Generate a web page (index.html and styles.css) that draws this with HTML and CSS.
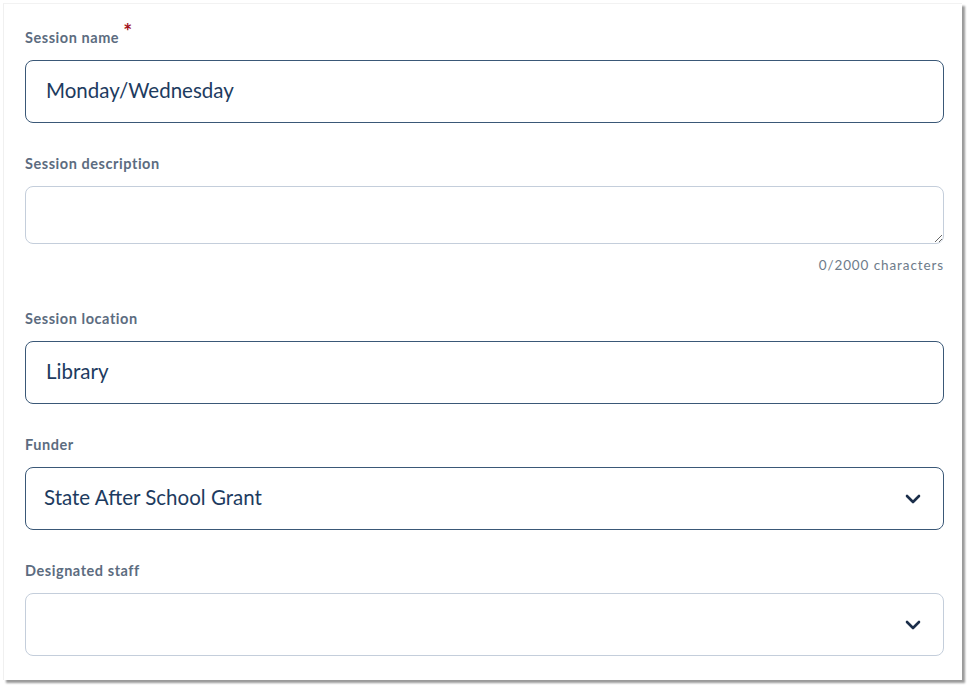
FILE: index.html
```html
<!DOCTYPE html>
<html lang="en">
<head>
<meta charset="utf-8">
<title>Session form</title>
<link rel="stylesheet" href="styles.css">
</head>
<body>
<div class="card">
  <form class="form">
    <div class="field">
      <label class="label" for="name">Session name <span class="req">*</span></label>
      <input id="name" class="control control--active" type="text" value="Monday/Wednesday">
    </div>
    <div class="field">
      <label class="label" for="desc">Session description</label>
      <textarea id="desc" class="control control--area"></textarea>
      <div class="counter">0/2000 characters</div>
    </div>
    <div class="field field--loc">
      <label class="label" for="loc">Session location</label>
      <input id="loc" class="control control--active" type="text" value="Library">
    </div>
    <div class="field">
      <label class="label" for="funder">Funder</label>
      <div class="select-wrap">
        <select id="funder" class="control control--active control--select">
          <option>State After School Grant</option>
        </select>
        <svg class="chev" viewBox="0 0 16 10" width="16" height="10"><path d="M2 2 L8 8 L14 2" fill="none" stroke="#1b2e4a" stroke-width="2.6" stroke-linecap="round" stroke-linejoin="round"/></svg>
      </div>
    </div>
    <div class="field">
      <label class="label" for="staff">Designated staff</label>
      <div class="select-wrap">
        <select id="staff" class="control control--select">
          <option></option>
        </select>
        <svg class="chev" viewBox="0 0 16 10" width="16" height="10"><path d="M2 2 L8 8 L14 2" fill="none" stroke="#1b2e4a" stroke-width="2.6" stroke-linecap="round" stroke-linejoin="round"/></svg>
      </div>
    </div>
  </form>
</div>
</body>
</html>
```
FILE: styles.css
```css
html, body {
  margin: 0;
  padding: 0;
  background: #ffffff;
}
body {
  font-family: "Lato", "Open Sans", sans-serif;
  width: 972px;
  height: 688px;
  overflow: hidden;
}
.card {
  margin: 3px 0 0 3px;
  width: 959px;
  height: 677px;
  box-sizing: border-box;
  background: #ffffff;
  border-left: 1px solid #f0f0f0;
  border-top: 1px solid #f2f2f2;
  box-shadow: 3px 3px 2px #9a9a9a;
  overflow: hidden;
}
.form {
  display: flex;
  flex-direction: column;
  gap: 31px;
  padding: 24px 18px 0 21px;
}
.field {
  display: flex;
  flex-direction: column;
}
.field--loc {
  margin-top: 4px;
}
.label {
  font-size: 14.5px;
  font-weight: 700;
  line-height: 19px;
  color: #5c6c80;
  margin-bottom: 13px;
  letter-spacing: 0.55px;
}
.req {
  color: #a3131c;
  font-size: 21px;
  line-height: 0;
  position: relative;
  top: -4px;
  margin-left: 0;
}
.control {
  box-sizing: border-box;
  width: 100%;
  height: 63px;
  border: 1px solid #c4cedb;
  border-radius: 8px;
  background: #ffffff;
  font-family: "Lato", "Open Sans", sans-serif;
  font-size: 20.5px;
  color: #1d3b60;
  padding: 0 19px 3px;
  outline: none;
  margin: 0;
}
.control--active {
  border-color: #3a5877;
}
input.control {
  padding-left: 20px;
}
.control--area {
  height: 58px;
  resize: vertical;
  display: block;
}
.counter {
  margin-top: 12px;
  text-align: right;
  font-size: 13.5px;
  line-height: 18px;
  color: #6e7b8a;
  letter-spacing: 0.9px;
}
.select-wrap {
  position: relative;
}
.control--select {
  appearance: none;
  -webkit-appearance: none;
  display: block;
  padding-left: 18px;
}
.chev {
  position: absolute;
  right: 23px;
  top: 27px;
  pointer-events: none;
}
```
